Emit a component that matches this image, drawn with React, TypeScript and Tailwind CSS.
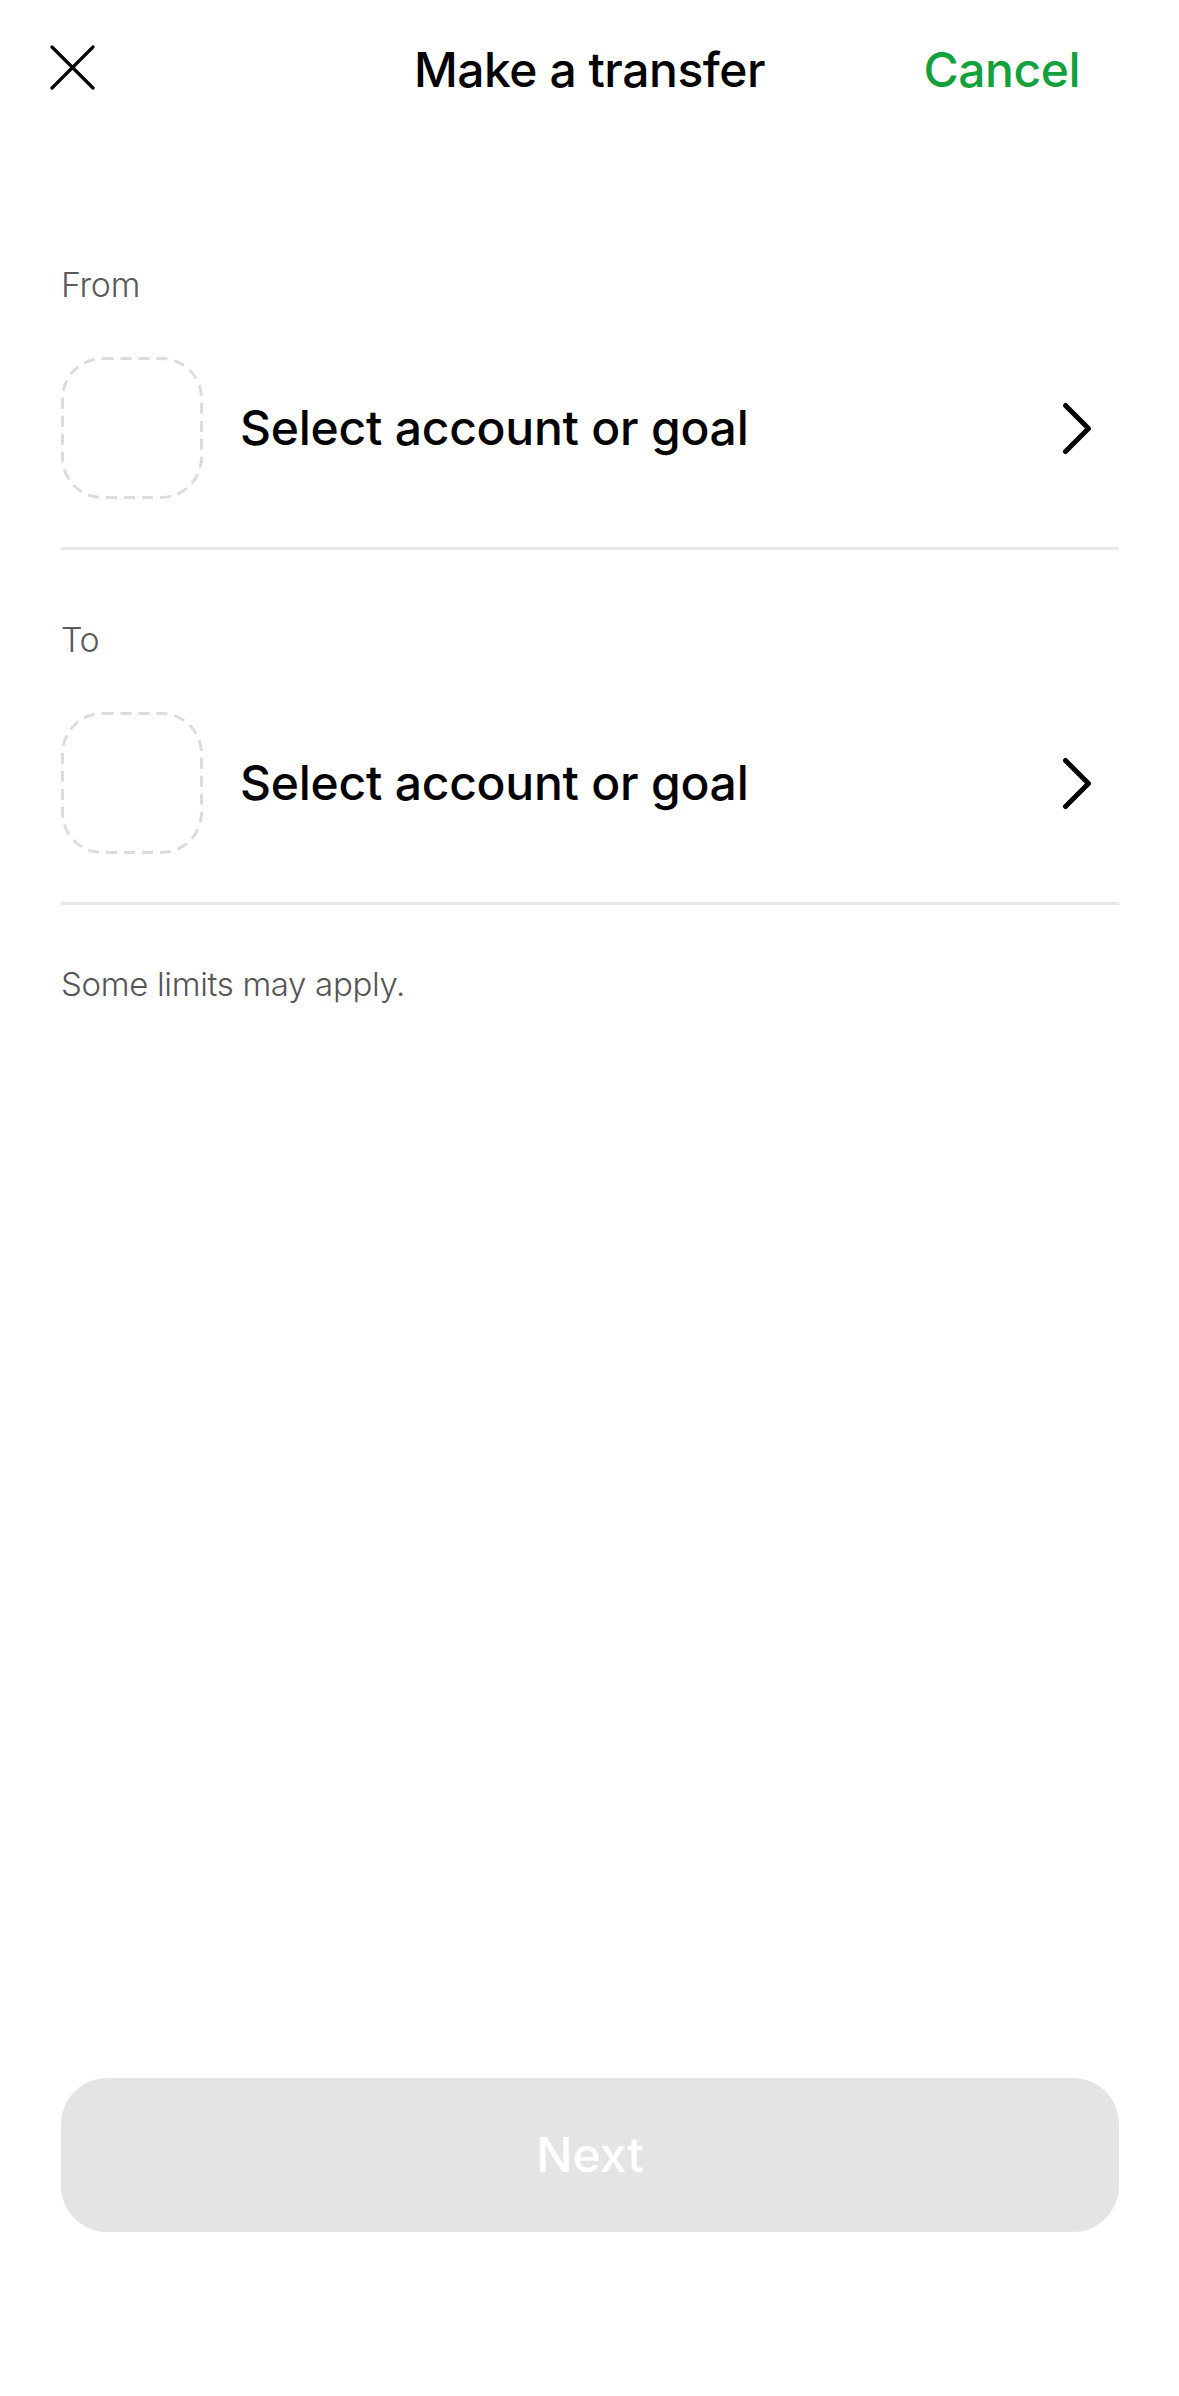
import React from "react";

function CloseIcon() {
  return (
    <svg width="45" height="45" viewBox="0 0 45 45" fill="none">
      <path d="M2 2L43 43M43 2L2 43" stroke="#000" strokeWidth="3.2" strokeLinecap="round" />
    </svg>
  );
}

function Chevron() {
  return (
    <svg width="30" height="53" viewBox="0 0 30 53" fill="none">
      <polyline
        points="3.5,3.5 26.5,26.5 3.5,49.5"
        stroke="#000"
        strokeWidth="5"
        strokeLinecap="round"
        strokeLinejoin="round"
      />
    </svg>
  );
}

// empty placeholder where the account avatar goes
function DashedTile() {
  return (
    <svg width="142" height="142" viewBox="0 0 142 142" fill="none" className="shrink-0">
      <rect
        x="1.5"
        y="1.5"
        width="139"
        height="139"
        rx="40"
        stroke="#dcdcdc"
        strokeWidth="3"
        strokeDasharray="11 7"
      />
    </svg>
  );
}

function AccountPicker({ label, top }: { label: string; top: string }) {
  return (
    <section>
      <div className={`${top} text-[34px] leading-[44px] font-light text-[#5a5a5a] tracking-[-0.01em]`}>
        {label}
      </div>
      <button className="mt-[50px] flex h-[142px] w-full items-center text-left">
        <DashedTile />
        <span className="ml-[37px] text-[48px] leading-none font-medium tracking-[-0.005em] text-black">
          Select account or goal
        </span>
        <span className="ml-auto mr-[27px] flex">
          <Chevron />
        </span>
      </button>
      <div className="mt-[48px] h-[3px] bg-[#e8e8e8]" />
    </section>
  );
}

export default function App() {
  return (
    <div className="flex min-h-[2396px] w-full flex-col bg-white font-[family-name:Inter,'Noto_Sans',sans-serif] text-black">
      <header className="grid h-[140px] grid-cols-[1fr_auto_1fr] items-center">
        <div className="pl-[50px]">
          <button className="-mt-[5px] flex">
            <CloseIcon />
          </button>
        </div>
        <h1 className="text-[48px] leading-none font-medium tracking-[-0.01em]">Make a transfer</h1>
        <div className="justify-self-end pr-[99px]">
          <button className="text-[48px] leading-none font-medium tracking-[-0.01em] text-[#14a03c]">Cancel</button>
        </div>
      </header>

      <main className="flex flex-1 flex-col pl-[61px] pr-[60px]">
        <AccountPicker label="From" top="mt-[123px]" />
        <AccountPicker label="To" top="mt-[68px]" />

        <p className="mt-[57px] text-[33px] leading-[44px] font-light tracking-[-0.01em] text-[#555]">
          Some limits may apply.
        </p>

        <button
          disabled
          className="mt-auto mb-[164px] flex h-[154px] w-full items-center justify-center rounded-[46px] bg-[#e4e4e4] text-[48px] font-medium text-white"
        >
          Next
        </button>
      </main>
    </div>
  );
}
